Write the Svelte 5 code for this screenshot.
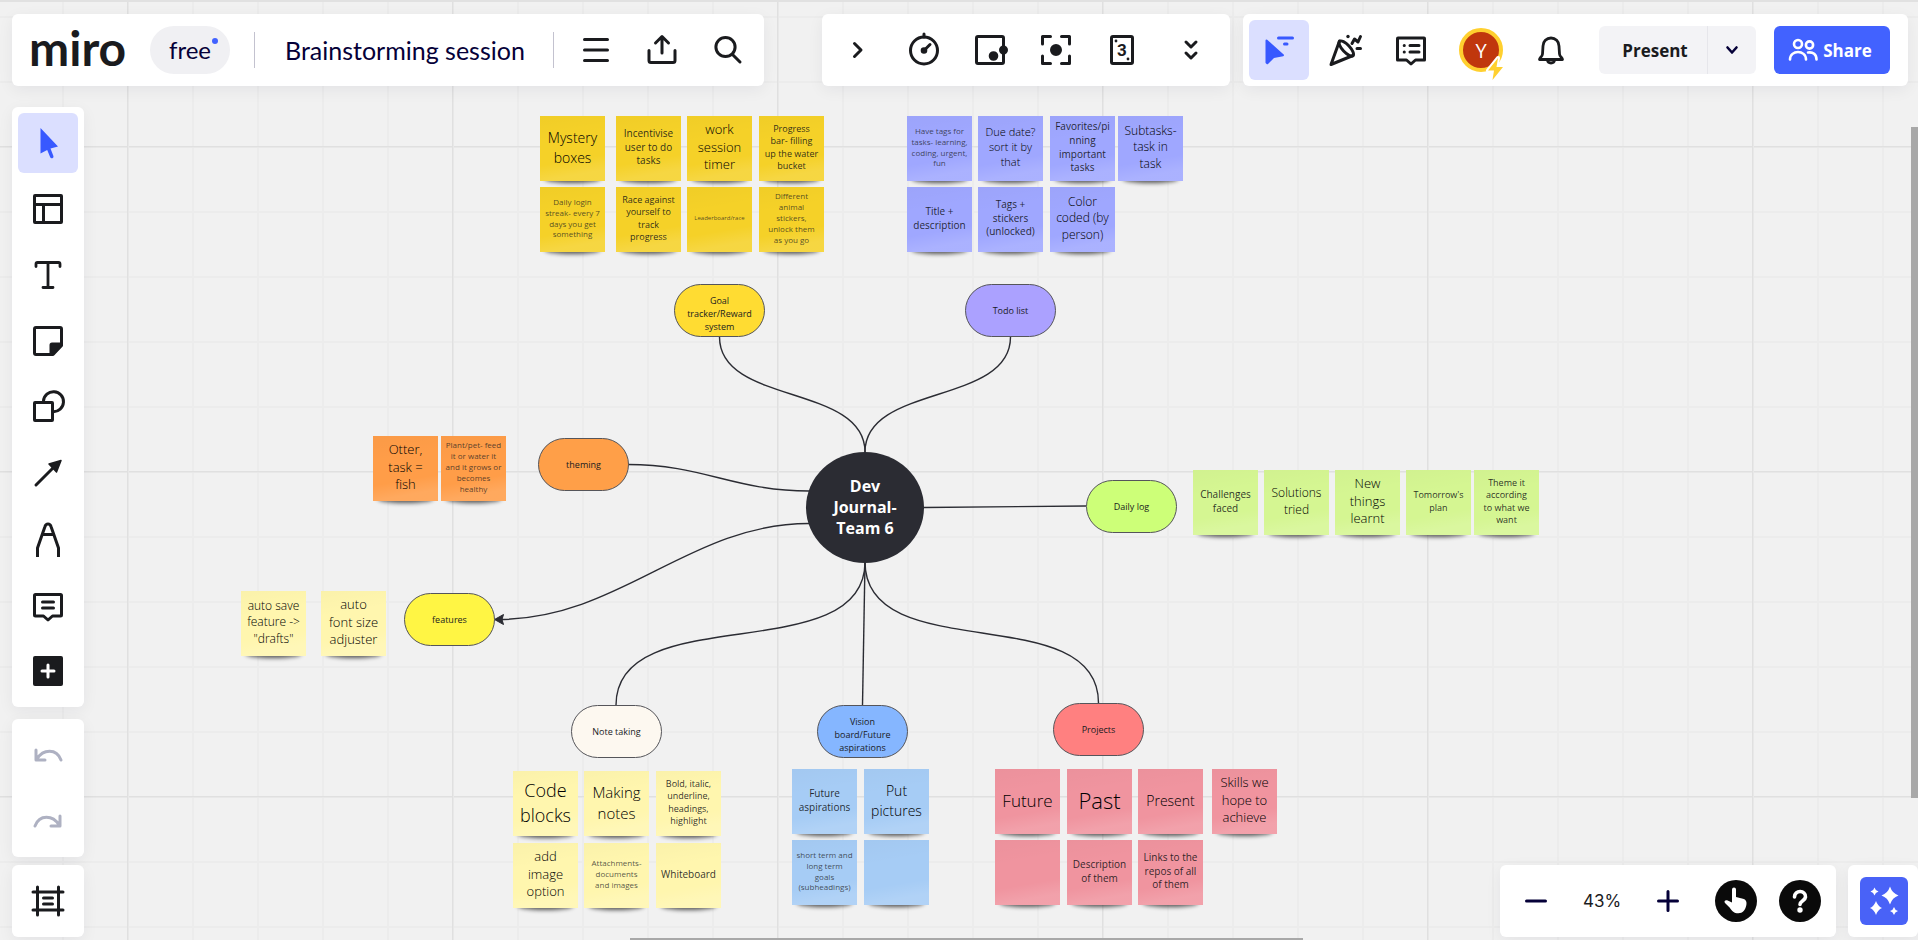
<script>
  const icons = {
    menu: '<path d="M6.500 7.500h23M6.500 18h23M6.500 28.500h23"/>',
    upload: '<path d="M18 21V5M11.500 11 18 4.500l6.500 6.500M5 18.500v10a2 2 0 0 0 2 2h22a2 2 0 0 0 2-2v-10"/>',
    search: '<circle cx="15.500" cy="15" r="9.600"/><path d="m22.500 22.500 7.500 7.500"/>',
    next: '<path d="m14.500 11.500 6.500 6.500-6.500 6.500"/>',
    timer: '<circle cx="18" cy="18.500" r="13.500"/><path d="M18 2v3M18 18.500l6-6"/><circle cx="18" cy="18.500" r="1.800" fill="currentColor"/>',
    voting: '<rect x="4.500" y="4.500" width="27" height="27" rx="1.500"/><circle cx="21.500" cy="24" r="3.300" fill="currentColor"/><circle cx="31.500" cy="18" r="3" fill="currentColor"/>',
    focus: '<path d="M4.500 12V4.500h8M23.500 4.500h8V12M31.500 24v7.500h-8M12.500 31.500h-8V24"/><circle cx="18" cy="18" r="4.500" fill="currentColor"/>',
    card: '<rect x="7.500" y="4.500" width="21" height="27" rx="1.500"/><circle cx="12" cy="9" r="1.400" fill="currentColor" stroke="none"/><circle cx="24" cy="27" r="1.400" fill="currentColor" stroke="none"/><text x="18" y="24" text-anchor="middle" font-family="Roboto, sans-serif" font-size="17" font-weight="700" fill="currentColor" stroke="none">3</text>',
    more: '<path d="m13 10 5 5 5-5M13 21l5 5 5-5"/>',
    pointer: '<path d="M5.500 8.500 22 23.200l-9.200 1.700-6.500 6.400-.8-.7Z" fill="currentColor" stroke-width="2"/><path d="M17.500 6h14M23.500 12h2.500"/>',
    party: '<path d="M12.500 9 4 32.500 26 23.500"/><ellipse cx="19.300" cy="16.500" rx="3.700" ry="9.800" transform="rotate(-43 19.300 16.500)"/><circle cx="21" cy="4.500" r="1.700" fill="currentColor" stroke="none"/><path d="m25 11.500 2.500-4.500 3.500 3 2.500-5.500M30 16.500h3.500"/>',
    list: '<path d="M5 6h26a.5.5 0 0 1 .5.500V28H22.500L18 32l-4.500-4h-9V6.500A.5.5 0 0 1 5 6Z"/><path d="M11.200 13.500h.1M11.200 20h.1M17 13.500h9M17 20h9"/>',
    bell: '<path d="M6.500 27.500h23c0-2-2.800-2.500-3-5.500l-.5-8a8 8 0 0 0-16 0l-.5 8c-.2 3-3 3.500-3 5.500ZM14.500 28c.3 4 6.700 4 7 0" stroke-width="2.800"/>',
    cursor: '<path d="M10.500 3v25.500l6.700-3.400 3 7.100a1.700 1.700 0 0 0 3.200-1.300l-2.900-7.300 7.500-2.100Z" fill="currentColor" stroke="none"/>',
    template: '<rect x="4.500" y="4.500" width="27" height="27" rx=".5"/><path d="M4.500 13.500h27M13.500 13.500v18"/>',
    text: '<path d="M6 9.500V7a1.500 1.500 0 0 1 1.500-1.500h21A1.500 1.500 0 0 1 30 7v2.500M18 5.500v25M13 30.500h10" stroke-width="2.800"/>',
    sticky: '<path d="M23 31.500H6A1.500 1.500 0 0 1 4.500 30V6A1.500 1.500 0 0 1 6 4.500h24A1.500 1.500 0 0 1 31.500 6v16.500Z"/><path d="M20.500 31.500V22a1.500 1.500 0 0 1 1.500-1.500h9.500v2l-9 9Z" fill="currentColor" stroke-width="2"/>',
    shapes: '<path d="M13.500 12A10 10 0 1 1 23 22.700"/><rect x="4.500" y="13.500" width="18" height="18" rx=".5"/>',
    arrow: '<path d="M6 30 24 12"/><path d="M31 5.500 26.500 17 19 9Z" fill="currentColor" stroke-width="1.500"/>',
    pen: '<path d="M7.500 36v-9L15 5.500c1-3.400 5-3.400 6 0L28.500 27v9M12.500 13.500h11" stroke-linecap="butt" />',
    comment: '<path d="M5.500 7.500h25a1 1 0 0 1 1 1V28a1 1 0 0 1-1 1h-8L18 33l-4.500-4h-8a1 1 0 0 1-1-1V8.500a1 1 0 0 1 1-1ZM12.500 15h11M12.500 21h11"/>',
    plus: '<rect x="3" y="3" width="30" height="30" rx="2" fill="currentColor" stroke="none"/><path d="M18 12v12M12 18h12" stroke="#fff"/>',
    undo: '<path d="M6 13v10h9M7 22C13 12 26.500 11 31 23"/>',
    redo: '<path d="M30 13v10h-9M29 22C23 12 9.500 11 5 23"/>',
    frame: '<path d="M7.500 4v28M28.500 4v28M3 9h30M3 27h30M13.500 15h9M13.500 21h9"/>',
    minus: '<path d="M8.500 18h19"/>',
    add: '<path d="M8.500 18h19M18 8.500v19"/>'
  };

  const tools = [
    ['cursor', 'Select'], ['template', 'Templates'], ['text', 'Text'], ['sticky', 'Sticky note'],
    ['shapes', 'Shapes'], ['arrow', 'Connection line'], ['pen', 'Pen'], ['comment', 'Comment'], ['plus', 'More tools']
  ];
  const activities = [
    ['next', 'Expand'], ['timer', 'Timer'], ['voting', 'Voting'], ['focus', 'Attention'], ['card', 'Estimation'], ['more', 'More apps']
  ];

  // Idea bubbles linked to the central topic
  const topics = [
    { x: 674, y: 284, c: '#ffdc32', t: 'Goal\ntracker/Reward\nsystem', tall: true },
    { x: 965, y: 284, c: '#aba1ff', t: 'Todo list' },
    { x: 538, y: 438, c: '#ff9f48', t: 'theming' },
    { x: 404, y: 593, c: '#fff544', t: 'features' },
    { x: 1086, y: 480, c: '#cdff78', t: 'Daily log' },
    { x: 571, y: 705, c: '#fdf8f0', t: 'Note taking' },
    { x: 817, y: 705, c: '#85b6ff', t: 'Vision\nboard/Future\naspirations', tall: true },
    { x: 1053, y: 703, c: '#ff8080', t: 'Projects' }
  ];

  // Sticky notes: kind, left, top, text size, text
  const notes = [
    ['gold', 540, 116, 14, 'Mystery\nboxes'],
    ['gold', 616, 116, 10, 'Incentivise\nuser to do\ntasks'],
    ['gold', 687, 116, 13, 'work\nsession\ntimer'],
    ['gold', 759, 116, 9, 'Progress\nbar- filling\nup the water\nbucket'],
    ['gold', 540, 187, 8, 'Daily login\nstreak- every 7\ndays you get\nsomething'],
    ['gold', 616, 187, 9, 'Race against\nyourself to\ntrack\nprogress'],
    ['gold', 687, 187, 6, 'Leaderboard/race'],
    ['gold', 759, 187, 8, 'Different\nanimal\nstickers,\nunlock them\nas you go'],
    ['violet', 907, 116, 8, 'Have tags for\ntasks- learning,\ncoding, urgent,\nfun'],
    ['violet', 978, 116, 11, 'Due date?\nsort it by\nthat'],
    ['violet', 1050, 116, 10, 'Favorites/pi\nnning\nimportant\ntasks'],
    ['violet', 1118, 116, 12, 'Subtasks-\ntask in\ntask'],
    ['violet', 907, 187, 10, 'Title +\ndescription'],
    ['violet', 978, 187, 10, 'Tags +\nstickers\n(unlocked)'],
    ['violet', 1050, 187, 12, 'Color\ncoded (by\nperson)'],
    ['orange', 373, 436, 13, 'Otter,\ntask =\nfish'],
    ['orange', 441, 436, 8, 'Plant/pet- feed\nit or water it\nand it grows or\nbecomes\nhealthy'],
    ['green', 1193, 470, 10, 'Challenges\nfaced'],
    ['green', 1264, 470, 12, 'Solutions\ntried'],
    ['green', 1335, 470, 13, 'New\nthings\nlearnt'],
    ['green', 1406, 470, 9, "Tomorrow's\nplan"],
    ['green', 1474, 470, 9, 'Theme it\naccording\nto what we\nwant'],
    ['lemon', 241, 591, 12, 'auto save\nfeature ->\n"drafts"'],
    ['lemon', 321, 591, 13, 'auto\nfont size\nadjuster'],
    ['lemon', 513, 771, 18, 'Code\nblocks'],
    ['lemon', 584, 771, 15, 'Making\nnotes'],
    ['lemon', 656, 771, 9, 'Bold, italic,\nunderline,\nheadings,\nhighlight'],
    ['lemon', 513, 843, 13, 'add\nimage\noption'],
    ['lemon', 584, 843, 8, 'Attachments-\ndocuments\nand images'],
    ['lemon', 656, 843, 10, 'Whiteboard'],
    ['blue', 792, 769, 10, 'Future\naspirations'],
    ['blue', 864, 769, 14, 'Put\npictures'],
    ['blue', 792, 840, 8, 'short term and\nlong term\ngoals\n(subheadings)'],
    ['blue', 864, 840, 10, ''],
    ['pink', 995, 769, 17, 'Future'],
    ['pink', 1067, 769, 22, 'Past'],
    ['pink', 1138, 769, 14, 'Present'],
    ['pink', 1212, 769, 13, 'Skills we\nhope to\nachieve'],
    ['pink', 995, 840, 10, ''],
    ['pink', 1067, 840, 10, 'Description\nof them'],
    ['pink', 1138, 840, 10, 'Links to the\nrepos of all\nof them']
  ];
</script>

{#snippet icon(name)}
  <svg class="icon" viewBox="0 0 36 36" fill="none" stroke="currentColor" stroke-width="3" stroke-linecap="round" stroke-linejoin="round" aria-hidden="true">{@html icons[name]}</svg>
{/snippet}

{#snippet tool(name, label, active = false, disabled = false)}
  <button class="tool" class:active {disabled} aria-label={label}>{@render icon(name)}</button>
{/snippet}

<div class="app">
  <div class="canvas">
    <svg class="links" aria-hidden="true">
      <g fill="none" stroke="#2b2c33" stroke-width="1.4">
        <path d="M719.500 337C719.500 405 865 384 865 452" />
        <path d="M1010.500 337C1010.500 405 865 384 865 452" />
        <path d="M628 464.500C703 464.500 734 491 809 491" />
        <path d="M809 523.500C689 523.500 620 619.500 498 619.500" />
        <path d="M924 507.500 1086 506" />
        <path d="M865 562C865 670 616 598 616 705" />
        <path d="M865 562 862.500 705" />
        <path d="M865 562C865 668 1098.500 598 1098.500 703" />
      </g>
      <path d="M494.500 619.500 503.500 614.500l-1.500 5 1.500 5Z" fill="#2b2c33" stroke="#2b2c33" />
    </svg>
    {#each topics as n}
      <div class="topic" class:tall={n.tall} style="left:{n.x}px;top:{n.y}px;background:{n.c}">{n.t}</div>
    {/each}
    <div class="root">Dev<br />Journal-<br />Team 6</div>
    {#each notes as [kind, x, y, size, t]}
      <div class="note {kind}" class:small={size < 11} class:faint={size < 9} style="left:{x}px;top:{y}px;font-size:{size}px"><span>{t}</span></div>
    {/each}
    <div class="scroll-y"></div>
    <div class="scroll-x"></div>
  </div>

  <header>
    <div class="panel board">
      <span class="logo">miro</span>
      <span class="plan">free<i></i></span>
      <span class="rule"></span>
      <h1>Brainstorming session</h1>
      <span class="rule"></span>
      {@render tool('menu', 'Main menu')}
      {@render tool('upload', 'Export this board')}
      {@render tool('search', 'Search')}
    </div>
    <div class="panel activities">
      {#each activities as [name, label]}{@render tool(name, label)}{/each}
    </div>
    <div class="panel collab">
      {@render tool('pointer', 'Collaborators’ cursors', true)}
      {@render tool('party', 'Reactions')}
      {@render tool('list', 'Comments')}
      <button class="avatar" aria-label="Profile">
        <span>Y</span>
        <svg viewBox="0 0 20 26" aria-hidden="true"><path d="M13 2 3 14.500h6L7.500 24 18 11h-6.500Z" fill="#ffd02f" stroke="#fff" stroke-width="4" stroke-linejoin="round" paint-order="stroke" /></svg>
      </button>
      {@render tool('bell', 'Notifications')}
      <div class="present">
        <button>Present</button>
        <button class="drop" aria-label="Present options">
          <svg viewBox="0 0 16 16" fill="none" stroke="#050038" stroke-width="2.600" stroke-linecap="round" stroke-linejoin="round" aria-hidden="true"><path d="m3.500 5.500 4.500 5 4.500-5" /></svg>
        </button>
      </div>
      <button class="share">
        <svg viewBox="0 0 30 24" fill="none" stroke="#fff" stroke-width="2.600" stroke-linecap="round" aria-hidden="true">
          <circle cx="10" cy="6" r="4" /><circle cx="21.500" cy="7" r="3.600" />
          <path d="M2 21.500c0-10 16-10 16 0M20 14.500c5-.8 8.500 2 8.500 7" />
        </svg>
        Share
      </button>
    </div>
  </header>

  <main>
    <nav>
      <div class="panel column">
        {#each tools as [name, label], i}{@render tool(name, label, i === 0)}{/each}
      </div>
      <div class="panel column">
        {@render tool('undo', 'Undo', false, true)}
        {@render tool('redo', 'Redo', false, true)}
      </div>
      <div class="panel column frames">{@render tool('frame', 'Frames')}</div>
    </nav>
    <div class="controls">
      <div class="panel zoom">
        {@render tool('minus', 'Zoom out')}
        <span class="level">43%</span>
        {@render tool('add', 'Zoom in')}
        <button class="tool learn" aria-label="Learning center">
          <svg class="disc" viewBox="0 0 42 42" aria-hidden="true">
            <circle cx="21" cy="21" r="21" fill="#0a0a0a" />
            <path d="M17 9.500a2 2 0 0 1 4 0V17l7 1.800c3 .8 4 3 3.400 6-.8 5-3.800 8.500-8 8.500-4.400 0-6.400-2.300-8.600-5.600L10 23c-1.500-2.200.7-3.500 2.700-2.500L17 22.500Z" fill="#fff" />
          </svg>
        </button>
        <button class="tool" aria-label="Help">
          <svg class="disc" viewBox="0 0 42 42" aria-hidden="true">
            <circle cx="21" cy="21" r="21" fill="#0a0a0a" />
            <path d="M15.500 17c0-7.500 11.500-7 11 0-.3 3.700-5.500 3.700-5.500 7.500" fill="none" stroke="#fff" stroke-width="3.600" stroke-linecap="round" />
            <circle cx="21" cy="30" r="2.700" fill="#fff" />
          </svg>
        </button>
      </div>
      <div class="panel assist">
        <button aria-label="Miro Assist">
          <svg viewBox="0 0 48 48" fill="#fff" aria-hidden="true">
            <path d="M30 9.500q2.200 6.800 8.500 9-6.300 2.200-8.500 9-2.200-6.800-8.500-9 6.300-2.200 8.500-9ZM16 24q1.800 5.200 6 7-4.200 1.800-6 7-1.800-5.200-6-7 4.200-1.800 6-7ZM14.500 10.500q.8 3.200 4 4-3.200.8-4 4-.8-3.200-4-4 3.200-.8 4-4ZM34 30q.8 3 4 4-3.200 1-4 4-.8-3-4-4 3.200-1 4-4Z" />
          </svg>
        </button>
      </div>
    </div>
  </main>
</div>

<style>
  :global(body) { margin: 0; }

  .app {
    position: relative;
    display: flex;
    flex-direction: column;
    gap: 21px;
    min-height: 100vh;
    box-sizing: border-box;
    padding: 14px 0 3px 12px;
    overflow: hidden;
    color: #1a1b1e;
    font-family: "Open Sans", "Noto Sans", sans-serif;
  }

  .canvas {
    position: absolute;
    inset: 0;
    border-top: 2px solid #e1e1e1;
    background-color: #f1f1f1;
    background-image:
      linear-gradient(90deg, #e0e0e0 1px, #e8e8e8 1px 2px, transparent 2px),
      linear-gradient(#e0e0e0 1px, #e8e8e8 1px 2px, transparent 2px),
      linear-gradient(90deg, #ececec 2px, transparent 2px),
      linear-gradient(#ececec 2px, transparent 2px);
    background-size: 325px 325px, 325px 325px, 65px 65px, 65px 65px;
    background-position: 127px 0, 0 144px, 62px 0, 0 14px;
  }

  .links,
  .topic,
  .root,
  .note { position: absolute; margin-top: -2px; }

  .links { left: 0; top: 0; width: 100%; height: 100%; overflow: visible; }

  .topic {
    display: flex;
    align-items: center;
    justify-content: center;
    box-sizing: border-box;
    width: 91px;
    height: 53px;
    border: 1px solid #55555a;
    border-radius: 27px;
    font-size: 9px;
    line-height: 13px;
    text-align: center;
    white-space: pre;
  }

  .tall { padding-top: 6px; }

  .root {
    left: 806px;
    top: 452px;
    display: flex;
    align-items: center;
    justify-content: center;
    width: 118px;
    height: 111px;
    border-radius: 50%;
    background: #2b2c33;
    color: #fff;
    font-size: 16px;
    font-weight: 700;
    line-height: 21px;
    text-align: center;
  }

  .note {
    display: flex;
    align-items: center;
    justify-content: center;
    box-sizing: border-box;
    width: 65px;
    height: 65px;
    padding-bottom: 2px;
    color: #000;
    font-weight: 360;
    line-height: 1.36;
    text-align: center;
    white-space: pre;
  }

  .note::before {
    content: "";
    position: absolute;
    left: 5px;
    right: 5px;
    bottom: -2px;
    height: 8px;
    border-radius: 0 0 50% 50%;
    background: rgb(0 0 0 / 65%);
    filter: blur(2px);
  }

  .note::after {
    content: "";
    position: absolute;
    inset: 0;
    background: var(--paper);
    background-image: linear-gradient(170deg, rgb(0 0 0 / 2%), transparent 35% 65%, rgb(255 255 255 / 12%) 85%);
  }

  .note span { position: relative; z-index: 1; }
  .note.small { color: rgb(16 17 20 / 88%); font-weight: 400; }
  .note.faint { color: rgb(26 27 30 / 75%); }
  .gold { --paper: #f5d128; }
  .violet { --paper: #9fa7ff; }
  .orange { --paper: #ff9d48; }
  .green { --paper: #d5f692; }
  .lemon { --paper: #fff6ae; }
  .blue { --paper: #a6ccf5; }
  .pink { --paper: #f0949f; }

  .scroll-y {
    position: absolute;
    right: 0;
    top: 125px;
    width: 7px;
    height: 671px;
    background: #a8a8a8;
  }

  .scroll-x {
    position: absolute;
    left: 630px;
    bottom: 0;
    width: 673px;
    height: 2px;
    background: #a8a8a8;
  }

  header,
  main,
  nav,
  .panel,
  .controls { position: relative; display: flex; }

  header { gap: 13px; padding-right: 10px; }

  .panel {
    align-items: center;
    gap: 6px;
    box-sizing: border-box;
    min-height: 72px;
    padding: 6px;
    border-radius: 6px;
    background: #fff;
    box-shadow: 0 4px 16px rgb(5 0 56 / 6%);
  }

  button {
    margin: 0;
    padding: 0;
    border: 0;
    background: none;
    color: inherit;
    font: inherit;
  }

  .tool {
    display: grid;
    place-items: center;
    flex: none;
    width: 60px;
    height: 60px;
    border-radius: 6px;
  }

  .tool.active { background: #dbdfff; color: #3859ff; }
  .tool:disabled { color: #aeb1c2; }
  .icon { display: block; width: 36px; height: 36px; }

  .board { margin-right: auto; padding-left: 17px; }

  .logo {
    width: 98px;
    margin-right: 17px;
    font-family: Lato, sans-serif;
    font-size: 48px;
    font-weight: 700;
    line-height: 56px;
    padding-bottom: 4px;
  }

  .plan {
    position: relative;
    display: grid;
    place-items: center;
    box-sizing: border-box;
    width: 80px;
    height: 48px;
    margin-right: 18px;
    padding-bottom: 2px;
    border-radius: 24px;
    background: #f0f0f3;
    color: #050038;
    font-family: Lato, sans-serif;
    font-size: 24px;
  }

  .plan i {
    position: absolute;
    top: 12px;
    right: 12px;
    width: 6px;
    height: 6px;
    border-radius: 50%;
    background: #4262ff;
  }

  .rule { width: 1px; height: 36px; margin-right: 6px; background: #c3c2cf; }

  h1 {
    margin: 0 22px 0 18px;
    color: #050038;
    font-family: Lato, sans-serif;
    font-size: 25px;
    font-weight: 400;
    line-height: 36px;
    white-space: nowrap;
  }

  .activities { padding-right: 9px; }
  .activities .tool:last-child { margin-left: 3px; }

  .avatar {
    position: relative;
    display: grid;
    place-items: center;
    width: 68px;
    height: 60px;
  }

  .avatar span {
    display: grid;
    place-items: center;
    box-sizing: border-box;
    width: 44px;
    height: 44px;
    border: 4px solid #ffd02f;
    border-radius: 50%;
    background: #c0370d;
    color: #fff;
    font-size: 20px;
  }

  .avatar svg { position: absolute; right: 10px; bottom: -2px; width: 20px; height: 26px; }

  .present {
    display: flex;
    height: 48px;
    margin: 0 12px;
    border-radius: 6px;
    background: #f3f3f6;
    font-size: 17px;
    font-weight: 700;
  }

  .present button { width: 108px; padding-left: 4px; }
  .present .drop { display: grid; place-items: center; width: 49px; padding: 0; border-left: 1px solid #e6e6eb; }
  .drop svg { width: 16px; height: 16px; }

  .share {
    display: flex;
    align-items: center;
    justify-content: center;
    gap: 5px;
    width: 116px;
    height: 48px;
    margin-right: 12px;
    padding-right: 4px;
    border-radius: 6px;
    background: #4262ff;
    color: #fff;
    font-size: 17px;
    font-weight: 700;
  }

  .share svg { width: 30px; height: 24px; }

  main { flex: 1; align-items: flex-end; justify-content: space-between; }
  nav { flex-direction: column; gap: 12px; }
  .column { flex-direction: column; }
  .frames { margin-top: -4px; }
  .controls { gap: 12px; }

  .zoom { color: #050038; }

  .level {
    width: 60px;
    color: #1a1b1e;
    font-family: Inter, sans-serif;
    font-size: 17px;
    text-align: center;
  }

  .disc { width: 42px; height: 42px; }
  .learn { padding-left: 4px; }
  .assist { padding: 12px 10px 12px 12px; }
  .assist button { width: 48px; height: 48px; border-radius: 6px; background: #4962f7; }
  .assist svg { display: block; width: 48px; height: 48px; }
</style>
